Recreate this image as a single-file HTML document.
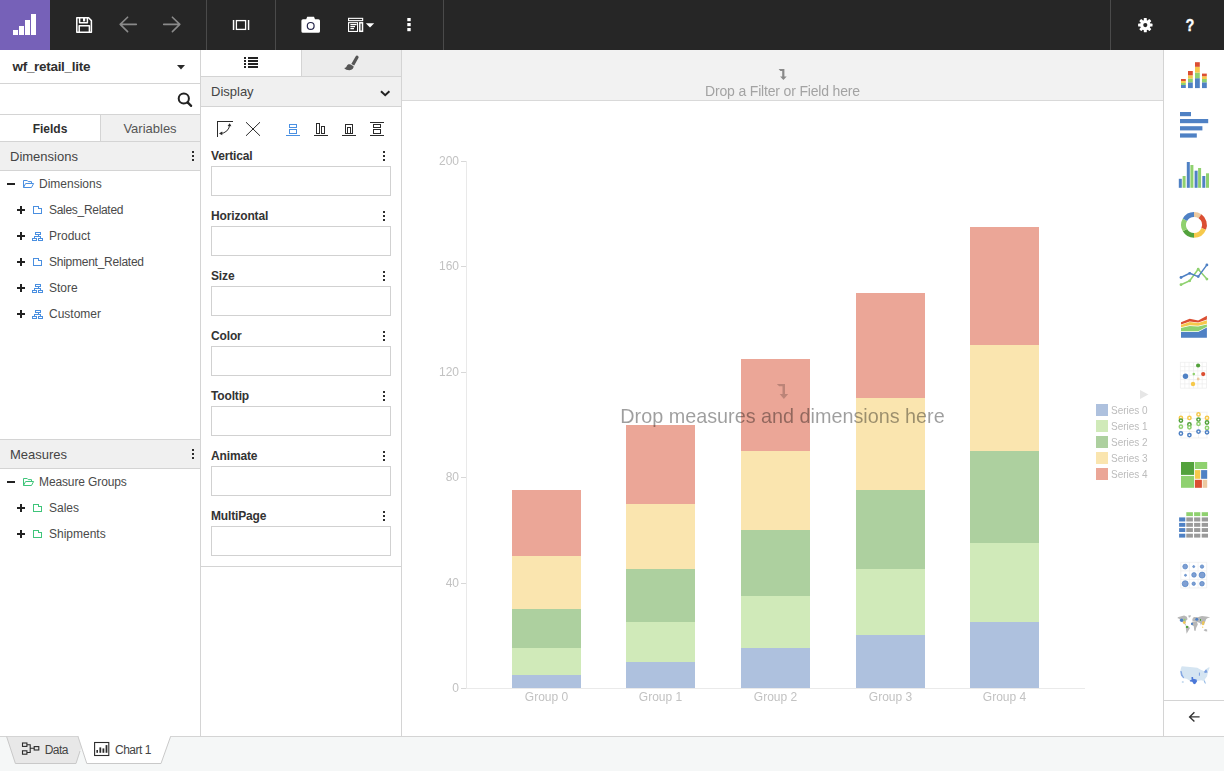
<!DOCTYPE html>
<html>
<head>
<meta charset="utf-8">
<title>WebFOCUS Designer</title>
<style>
*{box-sizing:border-box;margin:0;padding:0}
html,body{width:1224px;height:771px;overflow:hidden;background:#fff;font-family:"Liberation Sans",sans-serif;color:#333}
.abs{position:absolute}
#root{position:relative;width:1224px;height:771px;overflow:hidden;background:#fff}
#topbar{left:0;top:0;width:1224px;height:50px;background:#262626}
#logo{left:0;top:0;width:50px;height:50px;background:#7661b8}
.tsep{top:0;width:1px;height:50px;background:#4a4a4a}
.t{position:absolute;white-space:nowrap;line-height:1}
.hl{position:absolute;height:1px;background:#d4d4d4}
.vl{position:absolute;width:1px;background:#d4d4d4}
.hdr{position:absolute;background:#f0f0f0}
.box{position:absolute;left:211px;width:180px;height:30px;border:1px solid #d1d1d1;background:#fff}
.lbl{position:absolute;left:211px;font-weight:bold;font-size:12px;color:#333;line-height:1;white-space:nowrap;letter-spacing:-0.15px}
.dots{position:absolute;width:2px;height:2px;background:#2d2d2d;box-shadow:0 4px 0 #2d2d2d,0 8px 0 #2d2d2d}
.tree{position:absolute;font-size:12px;color:#4a4a4a;line-height:1;white-space:nowrap}
svg{position:absolute;overflow:visible}
</style>
</head>
<body>
<div id="root">

<!-- ================= TOP BAR ================= -->
<div id="topbar" class="abs"></div>
<div id="logo" class="abs"></div>
<svg style="left:0;top:0" width="50" height="50"><g fill="#fff"><rect x="13" y="30" width="5" height="5"/><rect x="19" y="26" width="5" height="9"/><rect x="25" y="20" width="5" height="15"/><rect x="31" y="14" width="5" height="21"/></g></svg>
<div class="abs tsep" style="left:206px"></div>
<div class="abs tsep" style="left:275px"></div>
<div class="abs tsep" style="left:443px"></div>
<div class="abs tsep" style="left:1110px"></div>
<!--TOPICONS-->
<svg style="left:0;top:0" width="1224" height="50">
<!-- save -->
<g fill="none" stroke="#fff" stroke-width="1.5" stroke-linejoin="round">
<path d="M76.8 17.8 H88.6 L91.4 20.6 V32.3 H76.8 Z"/>
<path d="M79.6 18 V22.7 H87.4 V18"/>
<path d="M79.2 32.2 V25.8 H89.4 V32.2"/>
</g>
<rect x="83" y="18" width="2.2" height="3.4" fill="#fff"/>
<!-- arrows -->
<g fill="none" stroke="#8a8a8a" stroke-width="1.6" stroke-linecap="round" stroke-linejoin="round">
<path d="M136.3 24.4 H120.2 M127.6 17.2 L120.2 24.4 L127.6 31.6"/>
<path d="M163.7 24.4 H179.8 M172.4 17.2 L179.8 24.4 L172.4 31.6"/>
</g>
<!-- fit icon -->
<g fill="#fff">
<rect x="232.8" y="20" width="1.5" height="10"/>
<rect x="247.8" y="20" width="1.5" height="10"/>
</g>
<rect x="236.4" y="20.6" width="9.2" height="8.8" fill="none" stroke="#fff" stroke-width="1.3"/>
<!-- camera -->
<path d="M303 19.2 H306.2 L307.2 16.8 H314 L315 19.2 H318.4 Q320 19.2 320 20.8 V31.2 Q320 32.8 318.4 32.8 H303 Q301.4 32.8 301.4 31.2 V20.8 Q301.4 19.2 303 19.2Z" fill="#fff"/>
<circle cx="310.7" cy="25.9" r="3.4" fill="none" stroke="#25254a" stroke-width="1.2"/>
<!-- layout icon -->
<g fill="none" stroke="#fff" stroke-width="1.1">
<rect x="348.55" y="18.35" width="14.1" height="2.3"/>
<rect x="348.55" y="22.65" width="9" height="8.8"/>
<rect x="359.8" y="22.8" width="2.7" height="8.5" stroke-width="1.5"/>
<path d="M350.4 24.6 H356.6 M350.4 26.6 H355 M350.4 28.6 H354"/>
</g>
<path d="M365.8 23.2 H374.2 L370 27.4Z" fill="#fff"/>
<!-- more dots -->
<g fill="#fff"><rect x="407.3" y="18" width="3.4" height="3.2"/><rect x="407.3" y="23" width="3.4" height="3.2"/><rect x="407.3" y="28" width="3.4" height="3.2"/></g>
<!-- gear -->
<g transform="translate(1145.3 25.1)">
<g fill="#fff">
<circle r="5.2"/>
<rect x="-1.5" y="-7.2" width="3" height="14.4" rx="0.6"/>
<rect x="-1.5" y="-7.2" width="3" height="14.4" rx="0.6" transform="rotate(45)"/>
<rect x="-1.5" y="-7.2" width="3" height="14.4" rx="0.6" transform="rotate(90)"/>
<rect x="-1.5" y="-7.2" width="3" height="14.4" rx="0.6" transform="rotate(135)"/>
</g>
<circle r="2.1" fill="#262626"/>
</g>
</svg>
<div class="t" style="left:1184.7px;top:18.3px;font-size:16px;font-weight:bold;color:#fff;-webkit-text-stroke:0.35px #fff;transform:scaleX(0.9);transform-origin:50% 50%">?</div>

<!--/TOPICONS-->

<!-- ================= LEFT PANEL ================= -->
<div class="vl" style="left:200px;top:50px;height:687px"></div>
<div class="hl" style="left:0;top:83px;width:200px"></div>
<div class="hl" style="left:0;top:114px;width:200px"></div>
<div class="hdr" style="left:100px;top:115px;width:100px;height:26px"></div>
<div class="vl" style="left:100px;top:115px;height:26px"></div>
<div class="hl" style="left:0;top:141px;width:200px"></div>
<div class="hdr" style="left:0;top:142px;width:200px;height:28px"></div>
<div class="hl" style="left:0;top:170px;width:200px"></div>
<div class="hl" style="left:0;top:439px;width:200px"></div>
<div class="hdr" style="left:0;top:440px;width:200px;height:28px"></div>
<div class="hl" style="left:0;top:468px;width:200px"></div>
<!--LEFTCONTENT-->
<div class="t" style="left:12.5px;top:59.5px;font-size:13.5px;font-weight:bold;color:#2f2f2f;letter-spacing:-0.3px">wf_retail_lite</div>
<svg style="left:177px;top:65px" width="8" height="5"><path d="M0 0 H8 L4 4.5Z" fill="#2a2a2a"/></svg>
<svg style="left:0;top:0" width="200" height="120"><circle cx="183.8" cy="98.5" r="5.1" stroke="#222" stroke-width="2" fill="none"/><path d="M187.6 102.4 L191.1 105.9" stroke="#222" stroke-width="2.3" stroke-linecap="round"/></svg>
<div class="t" style="left:0;top:122.6px;width:100px;text-align:center;font-size:12px;font-weight:bold;color:#2f2f2f">Fields</div>
<div class="t" style="left:100px;top:122px;width:100px;text-align:center;font-size:13px;color:#555">Variables</div>
<div class="t" style="left:10px;top:150px;font-size:13px;color:#444">Dimensions</div>
<div class="dots" style="left:192px;top:151px"></div>
<div class="t" style="left:10px;top:448px;font-size:13px;color:#444">Measures</div>
<div class="dots" style="left:192px;top:449px"></div>

<!-- tree expanders -->
<svg style="left:0;top:0" width="200" height="560" shape-rendering="crispEdges">
<g fill="#222">
<rect x="7" y="183" width="8" height="2"/>
<rect x="17" y="209" width="8" height="2"/><rect x="20" y="206" width="2" height="8"/>
<rect x="17" y="235" width="8" height="2"/><rect x="20" y="232" width="2" height="8"/>
<rect x="17" y="261" width="8" height="2"/><rect x="20" y="258" width="2" height="8"/>
<rect x="17" y="287" width="8" height="2"/><rect x="20" y="284" width="2" height="8"/>
<rect x="17" y="313" width="8" height="2"/><rect x="20" y="310" width="2" height="8"/>
<rect x="7" y="481" width="8" height="2"/>
<rect x="17" y="507" width="8" height="2"/><rect x="20" y="504" width="2" height="8"/>
<rect x="17" y="533" width="8" height="2"/><rect x="20" y="530" width="2" height="8"/>
</g>
</svg>
<!-- tree icons -->
<svg style="left:0;top:0" width="200" height="560">
<g stroke="#4a8fe0">
<g transform="translate(23 180)"><path d="M0.5 7.5 V0.5 H4.2 L5.2 1.6 H8.5 V3.5 M0.5 7.5 L2.6 3.5 H10.6 L8.5 7.5 Z" fill="none" stroke-width="1" stroke-linejoin="miter"/></g>
<g transform="translate(33 206)"><path d="M0.5 0.5 H5.5 V2.5 H8.5 V7.5 H0.5 Z" fill="none" stroke-width="1" stroke-linejoin="miter" shape-rendering="crispEdges"/></g>
<g transform="translate(32 232)" shape-rendering="crispEdges"><path d="M3.5 0.5 H8.5 V2.5 H3.5 Z M0.5 6.5 H4.5 V8.5 H0.5 Z M6.5 6.5 H10.5 V8.5 H6.5 Z M6 2.5 V4.5 M2.5 6.5 V4.5 H8.5 V6.5" fill="none" stroke-width="1"/></g>
<g transform="translate(33 258)"><path d="M0.5 0.5 H5.5 V2.5 H8.5 V7.5 H0.5 Z" fill="none" stroke-width="1" stroke-linejoin="miter" shape-rendering="crispEdges"/></g>
<g transform="translate(32 284)" shape-rendering="crispEdges"><path d="M3.5 0.5 H8.5 V2.5 H3.5 Z M0.5 6.5 H4.5 V8.5 H0.5 Z M6.5 6.5 H10.5 V8.5 H6.5 Z M6 2.5 V4.5 M2.5 6.5 V4.5 H8.5 V6.5" fill="none" stroke-width="1"/></g>
<g transform="translate(32 310)" shape-rendering="crispEdges"><path d="M3.5 0.5 H8.5 V2.5 H3.5 Z M0.5 6.5 H4.5 V8.5 H0.5 Z M6.5 6.5 H10.5 V8.5 H6.5 Z M6 2.5 V4.5 M2.5 6.5 V4.5 H8.5 V6.5" fill="none" stroke-width="1"/></g>
</g>
<g stroke="#3fc57a">
<g transform="translate(23 478)"><path d="M0.5 7.5 V0.5 H4.2 L5.2 1.6 H8.5 V3.5 M0.5 7.5 L2.6 3.5 H10.6 L8.5 7.5 Z" fill="none" stroke-width="1" stroke-linejoin="miter"/></g>
<g transform="translate(33 504)"><path d="M0.5 0.5 H5.5 V2.5 H8.5 V7.5 H0.5 Z" fill="none" stroke-width="1" stroke-linejoin="miter" shape-rendering="crispEdges"/></g>
<g transform="translate(33 530)"><path d="M0.5 0.5 H5.5 V2.5 H8.5 V7.5 H0.5 Z" fill="none" stroke-width="1" stroke-linejoin="miter" shape-rendering="crispEdges"/></g>
</g>
</svg>
<div class="tree" style="left:39px;top:178px">Dimensions</div>
<div class="tree" style="left:49px;top:204px;letter-spacing:-0.3px">Sales_Related</div>
<div class="tree" style="left:49px;top:230px">Product</div>
<div class="tree" style="left:49px;top:256px;letter-spacing:-0.25px">Shipment_Related</div>
<div class="tree" style="left:49px;top:282px">Store</div>
<div class="tree" style="left:49px;top:308px">Customer</div>
<div class="tree" style="left:39px;top:476px;letter-spacing:-0.12px">Measure Groups</div>
<div class="tree" style="left:49px;top:502px">Sales</div>
<div class="tree" style="left:49px;top:528px">Shipments</div>

<!--/LEFTCONTENT-->

<!-- ================= MIDDLE PANEL ================= -->
<div class="vl" style="left:401px;top:50px;height:687px"></div>
<div class="hdr" style="left:301px;top:50px;width:100px;height:26px;background:#ececec"></div>
<div class="vl" style="left:301px;top:50px;height:26px"></div>
<div class="hl" style="left:201px;top:76px;width:200px"></div>
<div class="hdr" style="left:201px;top:77px;width:200px;height:29px"></div>
<div class="hl" style="left:201px;top:106px;width:200px"></div>
<div class="hl" style="left:201px;top:566px;width:200px"></div>
<!--MIDCONTENT-->
<svg style="left:0;top:0" width="420" height="150" shape-rendering="crispEdges">
<g fill="#222">
<rect x="244" y="57" width="2" height="2"/><rect x="248" y="57" width="10" height="2"/>
<rect x="244" y="60" width="2" height="2"/><rect x="248" y="60" width="10" height="2"/>
<rect x="244" y="63" width="2" height="2"/><rect x="248" y="63" width="10" height="2"/>
<rect x="244" y="66" width="2" height="2"/><rect x="248" y="66" width="10" height="2"/>
</g>
<!-- toolbar icons -->
<g fill="#2b2b2b">
<rect x="217" y="121" width="1" height="16"/><rect x="217" y="121" width="16" height="1"/>
<rect x="314" y="135" width="14" height="1"/>
<rect x="342" y="135" width="14" height="1"/>
<rect x="370" y="135" width="14" height="1"/><rect x="370" y="122" width="14" height="1"/>
</g>
<rect x="286" y="135" width="14" height="1" fill="#4a90e2"/>
<g fill="none" stroke="#4a90e2" stroke-width="1">
<rect x="289.5" y="124.5" width="7" height="3"/><rect x="289.5" y="129.5" width="7" height="4"/>
</g>
<g fill="none" stroke="#2b2b2b" stroke-width="1">
<rect x="316.5" y="123.5" width="3" height="10"/><rect x="321.5" y="126.5" width="3" height="7"/>
<rect x="345.5" y="124.5" width="7" height="9"/><rect x="347.5" y="127.5" width="3" height="6"/>
<rect x="373.5" y="124.5" width="7" height="3"/><rect x="373.5" y="129.5" width="7" height="4"/>
</g>
</svg>
<svg style="left:0;top:0" width="420" height="150">
<!-- brush -->
<g fill="#555">
<path d="M357.6 55.8 C358.6 56.3 358.9 57.2 358.4 58.1 L354.2 65.6 L351.3 64 L355.6 56.5 C356.1 55.7 356.9 55.4 357.6 55.8Z"/>
<path d="M350.6 64.6 L353.6 66.3 C353.8 68.6 352 70.2 349.5 70.2 C347.3 70.2 345.2 69.5 344.2 68 C345.8 67.8 346.6 67 346.9 65.8 C347.3 64.4 349 63.8 350.6 64.6Z"/>
</g>
<!-- chevron -->
<path d="M381 91.2 L385.2 95.2 L389.4 91.2" fill="none" stroke="#222" stroke-width="2"/>
<!-- swap arc -->
<path d="M229.6 124.6 A9.4 8.9 0 0 1 220.2 133.5" fill="none" stroke="#2b2b2b" stroke-width="1"/>
<path d="M227.6 126 L229.7 123.2 L231.4 126.2Z M222.2 131.6 L219 133.5 L222.3 135.2Z" fill="#2b2b2b"/>
<!-- X -->
<path d="M246 122.2 L260 135.8 M260 122.2 L246 135.8" stroke="#2b2b2b" stroke-width="1"/>
</svg>
<div class="t" style="left:211px;top:85px;font-size:13px;color:#444">Display</div>
<div class="lbl" style="top:150px">Vertical</div>
<div class="dots" style="left:383px;top:151px"></div>
<div class="box" style="top:166px"></div>
<div class="lbl" style="top:210px">Horizontal</div>
<div class="dots" style="left:383px;top:211px"></div>
<div class="box" style="top:226px"></div>
<div class="lbl" style="top:270px">Size</div>
<div class="dots" style="left:383px;top:271px"></div>
<div class="box" style="top:286px"></div>
<div class="lbl" style="top:330px">Color</div>
<div class="dots" style="left:383px;top:331px"></div>
<div class="box" style="top:346px"></div>
<div class="lbl" style="top:390px">Tooltip</div>
<div class="dots" style="left:383px;top:391px"></div>
<div class="box" style="top:406px"></div>
<div class="lbl" style="top:450px">Animate</div>
<div class="dots" style="left:383px;top:451px"></div>
<div class="box" style="top:466px"></div>
<div class="lbl" style="top:510px">MultiPage</div>
<div class="dots" style="left:383px;top:511px"></div>
<div class="box" style="top:526px"></div>
<!--/MIDCONTENT-->

<!-- ================= MAIN ================= -->
<div class="hdr" style="left:402px;top:50px;width:761px;height:50px;background:#f2f2f2"></div>
<div class="hl" style="left:402px;top:100px;width:761px;background:#d9d9d9"></div>
<!--CHART-->
<div class="abs" style="left:0;top:0;width:1224px;height:771px;will-change:transform">
<svg style="left:0;top:0" width="1224" height="771" shape-rendering="crispEdges">
<rect x="512" y="674.83" width="69" height="13.17" fill="#aec1de"/>
<rect x="512" y="648.48" width="69" height="26.35" fill="#d0eab9"/>
<rect x="512" y="608.95" width="69" height="39.52" fill="#add09f"/>
<rect x="512" y="556.25" width="69" height="52.70" fill="#fae5af"/>
<rect x="512" y="490.38" width="69" height="65.88" fill="#eba697"/>
<rect x="626" y="661.65" width="69" height="26.35" fill="#aec1de"/>
<rect x="626" y="622.12" width="69" height="39.52" fill="#d0eab9"/>
<rect x="626" y="569.42" width="69" height="52.70" fill="#add09f"/>
<rect x="626" y="503.55" width="69" height="65.87" fill="#fae5af"/>
<rect x="626" y="424.50" width="69" height="79.05" fill="#eba697"/>
<rect x="741" y="648.48" width="69" height="39.52" fill="#aec1de"/>
<rect x="741" y="595.77" width="69" height="52.70" fill="#d0eab9"/>
<rect x="741" y="529.90" width="69" height="65.88" fill="#add09f"/>
<rect x="741" y="450.85" width="69" height="79.05" fill="#fae5af"/>
<rect x="741" y="358.62" width="69" height="92.23" fill="#eba697"/>
<rect x="856" y="635.30" width="69" height="52.70" fill="#aec1de"/>
<rect x="856" y="569.42" width="69" height="65.88" fill="#d0eab9"/>
<rect x="856" y="490.38" width="69" height="79.05" fill="#add09f"/>
<rect x="856" y="398.15" width="69" height="92.22" fill="#fae5af"/>
<rect x="856" y="292.75" width="69" height="105.40" fill="#eba697"/>
<rect x="970" y="622.12" width="69" height="65.88" fill="#aec1de"/>
<rect x="970" y="543.08" width="69" height="79.05" fill="#d0eab9"/>
<rect x="970" y="450.85" width="69" height="92.23" fill="#add09f"/>
<rect x="970" y="345.45" width="69" height="105.40" fill="#fae5af"/>
<rect x="970" y="226.88" width="69" height="118.57" fill="#eba697"/>
<rect x="466" y="161" width="1" height="528" fill="#e9e9e9"/>
<rect x="466" y="688" width="619" height="1" fill="#eaeaea"/>
<rect x="461" y="688" width="5" height="1" fill="#d8d8d8"/>
<rect x="461" y="583" width="5" height="1" fill="#d8d8d8"/>
<rect x="461" y="477" width="5" height="1" fill="#d8d8d8"/>
<rect x="461" y="372" width="5" height="1" fill="#d8d8d8"/>
<rect x="461" y="266" width="5" height="1" fill="#d8d8d8"/>
<rect x="461" y="161" width="5" height="1" fill="#d8d8d8"/>
</svg>
<div class="t" style="right:765px;top:682px;font-size:12px;color:#c2c2c2">0</div>
<div class="t" style="right:765px;top:577px;font-size:12px;color:#c2c2c2">40</div>
<div class="t" style="right:765px;top:471px;font-size:12px;color:#c2c2c2">80</div>
<div class="t" style="right:765px;top:366px;font-size:12px;color:#c2c2c2">120</div>
<div class="t" style="right:765px;top:260px;font-size:12px;color:#c2c2c2">160</div>
<div class="t" style="right:765px;top:155px;font-size:12px;color:#c2c2c2">200</div>
<div class="t" style="left:492px;top:691px;width:109px;text-align:center;font-size:12px;color:#c2c2c2">Group 0</div>
<div class="t" style="left:606px;top:691px;width:109px;text-align:center;font-size:12px;color:#c2c2c2">Group 1</div>
<div class="t" style="left:721px;top:691px;width:109px;text-align:center;font-size:12px;color:#c2c2c2">Group 2</div>
<div class="t" style="left:836px;top:691px;width:109px;text-align:center;font-size:12px;color:#c2c2c2">Group 3</div>
<div class="t" style="left:950px;top:691px;width:109px;text-align:center;font-size:12px;color:#c2c2c2">Group 4</div>
<div class="abs" style="left:1096px;top:404px;width:12px;height:12px;background:#aec1de"></div>
<div class="t" style="left:1111px;top:406px;font-size:10px;color:#bcbcbc">Series 0</div>
<div class="abs" style="left:1096px;top:420px;width:12px;height:12px;background:#d0eab9"></div>
<div class="t" style="left:1111px;top:422px;font-size:10px;color:#bcbcbc">Series 1</div>
<div class="abs" style="left:1096px;top:436px;width:12px;height:12px;background:#add09f"></div>
<div class="t" style="left:1111px;top:438px;font-size:10px;color:#bcbcbc">Series 2</div>
<div class="abs" style="left:1096px;top:452px;width:12px;height:12px;background:#fae5af"></div>
<div class="t" style="left:1111px;top:454px;font-size:10px;color:#bcbcbc">Series 3</div>
<div class="abs" style="left:1096px;top:468px;width:12px;height:12px;background:#eba697"></div>
<div class="t" style="left:1111px;top:470px;font-size:10px;color:#bcbcbc">Series 4</div>
<svg style="left:1140px;top:390px" width="9" height="9"><path d="M0 0 L8.5 4.5 L0 9Z" fill="#e6e6e6"/></svg>
<div class="t" id="dropf" style="left:402px;top:84px;width:761px;text-align:center;font-size:14px;letter-spacing:-0.17px;color:#a3a3a3">Drop a Filter or Field here</div>
<svg style="left:0;top:0" width="1224" height="120"><path d="M778.6 69 H784.4 V76.4 H786.7 L783.4 80.1 L780.1 76.4 H782.2 V71 H780.4 Z" fill="#8a8a8a"/></svg>
<div class="t" id="dropm" style="left:402px;top:406.8px;width:761px;text-align:center;font-size:19.8px;color:rgba(0,0,0,0.38)">Drop measures and dimensions here</div>
<svg style="left:0;top:0" width="1224" height="420"><path d="M776.8 384 H785 V394.1 H788.2 L783.9 399 L779.7 394.1 H782.5 V386.2 H779.2 Z" fill="rgba(0,0,0,0.2)"/></svg>
</div>
<!--/CHART-->

<!-- ================= RIGHT STRIP ================= -->
<div class="vl" style="left:1163px;top:50px;height:687px"></div>
<div class="hl" style="left:1164px;top:700px;width:60px"></div>
<!--RIGHTICONS-->
<svg style="left:0;top:0" width="1224" height="771">
<rect x="1181.0" y="85.0" width="4.8" height="3.0" fill="#4f81c4"/>
<rect x="1181.0" y="83.0" width="4.8" height="2.0" fill="#8fd16f"/>
<rect x="1181.0" y="81.0" width="4.8" height="2.0" fill="#f6c94c"/>
<rect x="1181.0" y="79.0" width="4.8" height="2.0" fill="#db4e32"/>
<rect x="1188.0" y="82.3" width="4.8" height="5.8" fill="#4f81c4"/>
<rect x="1188.0" y="78.5" width="4.8" height="3.8" fill="#8fd16f"/>
<rect x="1188.0" y="75.3" width="4.8" height="3.2" fill="#f6c94c"/>
<rect x="1188.0" y="71.0" width="4.8" height="4.3" fill="#db4e32"/>
<rect x="1195.0" y="78.2" width="4.8" height="9.9" fill="#4f81c4"/>
<rect x="1195.0" y="72.6" width="4.8" height="5.6" fill="#8fd16f"/>
<rect x="1195.0" y="66.8" width="4.8" height="5.8" fill="#f6c94c"/>
<rect x="1195.0" y="62.2" width="4.8" height="4.6" fill="#db4e32"/>
<rect x="1202.0" y="82.3" width="4.8" height="5.8" fill="#4f81c4"/>
<rect x="1202.0" y="79.0" width="4.8" height="3.3" fill="#8fd16f"/>
<rect x="1202.0" y="76.2" width="4.8" height="2.8" fill="#f6c94c"/>
<rect x="1202.0" y="73.6" width="4.8" height="2.6" fill="#db4e32"/>
<rect x="1180" y="112.0" width="11.0" height="4.2" fill="#4f81c4"/>
<rect x="1180" y="119.0" width="28.2" height="4.2" fill="#4f81c4"/>
<rect x="1180" y="126.2" width="22.4" height="4.2" fill="#4f81c4"/>
<rect x="1180" y="133.4" width="16.8" height="4.2" fill="#4f81c4"/>
<rect x="1178.8" y="178.8" width="3" height="9.0" fill="#4f81c4"/>
<rect x="1182.6" y="176.0" width="3" height="11.8" fill="#8fd16f"/>
<rect x="1186.8" y="162.0" width="3" height="25.8" fill="#4f81c4"/>
<rect x="1190.4" y="165.0" width="3" height="22.8" fill="#8fd16f"/>
<rect x="1194.6" y="170.7" width="3" height="17.1" fill="#4f81c4"/>
<rect x="1198.1" y="168.0" width="3" height="19.8" fill="#8fd16f"/>
<rect x="1202.3" y="176.0" width="3" height="11.8" fill="#4f81c4"/>
<rect x="1206.0" y="173.3" width="3" height="14.5" fill="#8fd16f"/>
<path d="M1194.00 212.00 A12.90 12.90 0 0 1 1201.40 214.33 L1198.59 218.35 A8.00 8.00 0 0 0 1194.00 216.90 Z" fill="#ecc9a0"/>
<path d="M1201.40 214.33 A12.90 12.90 0 0 1 1205.96 229.73 L1201.42 227.90 A8.00 8.00 0 0 0 1198.59 218.35 Z" fill="#db4e32"/>
<path d="M1205.96 229.73 A12.90 12.90 0 0 1 1194.00 237.80 L1194.00 232.90 A8.00 8.00 0 0 0 1201.42 227.90 Z" fill="#f6c94c"/>
<path d="M1194.00 237.80 A12.90 12.90 0 0 1 1182.83 231.35 L1187.07 228.90 A8.00 8.00 0 0 0 1194.00 232.90 Z" fill="#53a23c"/>
<path d="M1182.83 231.35 A12.90 12.90 0 0 1 1182.83 218.45 L1187.07 220.90 A8.00 8.00 0 0 0 1187.07 228.90 Z" fill="#8fd16f"/>
<path d="M1182.83 218.45 A12.90 12.90 0 0 1 1194.00 212.00 L1194.00 216.90 A8.00 8.00 0 0 0 1187.07 220.90 Z" fill="#4f81c4"/>
<polyline points="1181.0,284.7 1189.7,280.8 1198.2,269.2 1206.9,279.1" fill="none" stroke="#8fd16f" stroke-width="1.5" stroke-linejoin="round"/>
<circle cx="1181.0" cy="284.7" r="1.4" fill="#8fd16f"/>
<circle cx="1189.7" cy="280.8" r="1.4" fill="#8fd16f"/>
<circle cx="1198.2" cy="269.2" r="1.4" fill="#8fd16f"/>
<circle cx="1206.9" cy="279.1" r="1.4" fill="#8fd16f"/>
<polyline points="1181.0,277.5 1189.7,273.3 1198.2,276.6 1206.9,264.9" fill="none" stroke="#4f81c4" stroke-width="1.5" stroke-linejoin="round"/>
<circle cx="1181.0" cy="277.5" r="1.4" fill="#4f81c4"/>
<circle cx="1189.7" cy="273.3" r="1.4" fill="#4f81c4"/>
<circle cx="1198.2" cy="276.6" r="1.4" fill="#4f81c4"/>
<circle cx="1206.9" cy="264.9" r="1.4" fill="#4f81c4"/>
<polygon points="1181.0,322.3 1189.7,318.7 1198.2,320.6 1206.9,315.8 1206.9,319.6 1198.2,322.4 1189.7,321.6 1181.0,324.4" fill="#db4e32"/>
<polygon points="1181.0,324.9 1189.7,322.1 1198.2,322.9 1206.9,320.2 1206.9,323.8 1198.2,325.8 1189.7,325.2 1181.0,327.3" fill="#f6c94c"/>
<polygon points="1181.0,327.9 1189.7,325.9 1198.2,326.5 1206.9,324.6 1206.9,326.8 1198.2,331.3 1189.7,331.3 1181.0,331.3" fill="#8fd16f"/>
<polygon points="1181.0,331.9 1189.7,331.9 1198.2,331.9 1206.9,327.5 1206.9,337.8 1198.2,337.8 1189.7,337.8 1181.0,337.8" fill="#4f81c4"/>
<path d="M1180.4 362.3 V388.2 M1180.4 362.3 H1206.5" stroke="#e9e9e9" stroke-width="0.6" fill="none"/>
<path d="M1184.8 362.3 V388.2 M1180.4 366.6 H1206.5" stroke="#e9e9e9" stroke-width="0.6" fill="none"/>
<path d="M1189.1 362.3 V388.2 M1180.4 370.9 H1206.5" stroke="#e9e9e9" stroke-width="0.6" fill="none"/>
<path d="M1193.5 362.3 V388.2 M1180.4 375.3 H1206.5" stroke="#e9e9e9" stroke-width="0.6" fill="none"/>
<path d="M1197.8 362.3 V388.2 M1180.4 379.6 H1206.5" stroke="#e9e9e9" stroke-width="0.6" fill="none"/>
<path d="M1202.2 362.3 V388.2 M1180.4 383.9 H1206.5" stroke="#e9e9e9" stroke-width="0.6" fill="none"/>
<path d="M1206.5 362.3 V388.2 M1180.4 388.2 H1206.5" stroke="#e9e9e9" stroke-width="0.6" fill="none"/>
<circle cx="1198.1" cy="365.5" r="2.1" fill="#53a23c"/>
<circle cx="1185.5" cy="376.3" r="2.7" fill="#4f81c4"/>
<circle cx="1193.8" cy="374.1" r="1.3" fill="#8fd16f"/>
<circle cx="1203.2" cy="374.1" r="2.1" fill="#db4e32"/>
<circle cx="1198.2" cy="379.0" r="1.4" fill="#ecc9a0"/>
<circle cx="1193.0" cy="384.0" r="2.2" fill="#f6c94c"/>
<path d="M1180.9 412.2 V438" stroke="#e9e9e9" stroke-width="0.6"/>
<path d="M1189.4 412.2 V438" stroke="#e9e9e9" stroke-width="0.6"/>
<path d="M1198.5 412.2 V438" stroke="#e9e9e9" stroke-width="0.6"/>
<path d="M1207.0 412.2 V438" stroke="#e9e9e9" stroke-width="0.6"/>
<path d="M1180.4 412.2 H1207.6" stroke="#e9e9e9" stroke-width="0.6"/>
<path d="M1180.4 418.6 H1207.6" stroke="#e9e9e9" stroke-width="0.6"/>
<path d="M1180.4 425.0 H1207.6" stroke="#e9e9e9" stroke-width="0.6"/>
<path d="M1180.4 431.5 H1207.6" stroke="#e9e9e9" stroke-width="0.6"/>
<path d="M1180.4 438.0 H1207.6" stroke="#e9e9e9" stroke-width="0.6"/>
<circle cx="1180.9" cy="417.9" r="1.65" fill="#fff" stroke="#f6c94c" stroke-width="1.5"/>
<circle cx="1189.4" cy="417.9" r="1.65" fill="#fff" stroke="#f6c94c" stroke-width="1.5"/>
<circle cx="1198.5" cy="414.4" r="1.65" fill="#fff" stroke="#f6c94c" stroke-width="1.5"/>
<circle cx="1207.0" cy="417.9" r="1.65" fill="#fff" stroke="#f6c94c" stroke-width="1.5"/>
<circle cx="1180.9" cy="420.6" r="1.65" fill="#fff" stroke="#53a23c" stroke-width="1.5"/>
<circle cx="1189.4" cy="424.4" r="1.65" fill="#fff" stroke="#53a23c" stroke-width="1.5"/>
<circle cx="1198.5" cy="419.6" r="1.65" fill="#fff" stroke="#53a23c" stroke-width="1.5"/>
<circle cx="1207.0" cy="422.5" r="1.65" fill="#fff" stroke="#53a23c" stroke-width="1.5"/>
<circle cx="1180.9" cy="426.7" r="1.65" fill="#fff" stroke="#8fd16f" stroke-width="1.5"/>
<circle cx="1189.4" cy="427.3" r="1.65" fill="#fff" stroke="#8fd16f" stroke-width="1.5"/>
<circle cx="1198.5" cy="423.8" r="1.65" fill="#fff" stroke="#8fd16f" stroke-width="1.5"/>
<circle cx="1207.0" cy="428.0" r="1.65" fill="#fff" stroke="#8fd16f" stroke-width="1.5"/>
<circle cx="1180.9" cy="433.5" r="1.65" fill="#fff" stroke="#4f81c4" stroke-width="1.5"/>
<circle cx="1189.4" cy="435.1" r="1.65" fill="#fff" stroke="#4f81c4" stroke-width="1.5"/>
<circle cx="1198.5" cy="431.6" r="1.65" fill="#fff" stroke="#4f81c4" stroke-width="1.5"/>
<circle cx="1207.0" cy="432.3" r="1.65" fill="#fff" stroke="#4f81c4" stroke-width="1.5"/>
<rect x="1181.0" y="462.0" width="13.1" height="12.9" fill="#53a23c"/>
<rect x="1181.0" y="475.9" width="13.1" height="11.9" fill="#8fd16f"/>
<rect x="1194.9" y="462.0" width="12.3" height="7.0" fill="#8fd16f"/>
<rect x="1194.9" y="470.1" width="5.4" height="8.7" fill="#f6c94c"/>
<rect x="1201.1" y="470.1" width="6.1" height="8.7" fill="#4f81c4"/>
<rect x="1194.9" y="479.8" width="7.0" height="8.0" fill="#db4e32"/>
<rect x="1202.6" y="479.8" width="4.6" height="8.0" fill="#ecc9a0"/>
<rect x="1186.3" y="512.2" width="6.6" height="3.9" fill="#8fd16f"/>
<rect x="1194.1" y="512.2" width="6.2" height="3.9" fill="#8fd16f"/>
<rect x="1201.7" y="512.2" width="6.3" height="3.9" fill="#8fd16f"/>
<rect x="1179.1" y="517.4" width="6.2" height="4.1" fill="#4f81c4"/>
<rect x="1186.3" y="517.4" width="6.6" height="4.1" fill="#9a9a9a"/>
<rect x="1194.1" y="517.4" width="6.2" height="4.1" fill="#9a9a9a"/>
<rect x="1201.7" y="517.4" width="6.3" height="4.1" fill="#9a9a9a"/>
<rect x="1179.1" y="522.9" width="6.2" height="3.9" fill="#4f81c4"/>
<rect x="1186.3" y="522.9" width="6.6" height="3.9" fill="#9a9a9a"/>
<rect x="1194.1" y="522.9" width="6.2" height="3.9" fill="#9a9a9a"/>
<rect x="1201.7" y="522.9" width="6.3" height="3.9" fill="#9a9a9a"/>
<rect x="1179.1" y="528.1" width="6.2" height="3.9" fill="#4f81c4"/>
<rect x="1186.3" y="528.1" width="6.6" height="3.9" fill="#9a9a9a"/>
<rect x="1194.1" y="528.1" width="6.2" height="3.9" fill="#9a9a9a"/>
<rect x="1201.7" y="528.1" width="6.3" height="3.9" fill="#9a9a9a"/>
<rect x="1179.1" y="533.7" width="6.2" height="3.9" fill="#4f81c4"/>
<rect x="1186.3" y="533.7" width="6.6" height="3.9" fill="#9a9a9a"/>
<rect x="1194.1" y="533.7" width="6.2" height="3.9" fill="#9a9a9a"/>
<rect x="1201.7" y="533.7" width="6.3" height="3.9" fill="#9a9a9a"/>
<path d="M1180.8 562.3 V588 M1180.8 562.3 H1206.7" stroke="#e9e9e9" stroke-width="0.6" fill="none"/>
<path d="M1189.4 562.3 V588 M1180.8 570.9 H1206.7" stroke="#e9e9e9" stroke-width="0.6" fill="none"/>
<path d="M1198.1 562.3 V588 M1180.8 579.4 H1206.7" stroke="#e9e9e9" stroke-width="0.6" fill="none"/>
<path d="M1206.7 562.3 V588 M1180.8 588.0 H1206.7" stroke="#e9e9e9" stroke-width="0.6" fill="none"/>
<circle cx="1185.2" cy="566.6" r="2.4" fill="#7f9fd2" stroke="#4f81c4" stroke-width="0.7"/>
<circle cx="1193.7" cy="566.6" r="1.0" fill="#7f9fd2" stroke="#4f81c4" stroke-width="0.7"/>
<circle cx="1202.0" cy="566.6" r="1.7" fill="#7f9fd2" stroke="#4f81c4" stroke-width="0.7"/>
<circle cx="1185.5" cy="575.3" r="1.0" fill="#7f9fd2" stroke="#4f81c4" stroke-width="0.7"/>
<circle cx="1194.0" cy="574.9" r="2.3" fill="#7f9fd2" stroke="#4f81c4" stroke-width="0.7"/>
<circle cx="1202.1" cy="575.1" r="3.0" fill="#7f9fd2" stroke="#4f81c4" stroke-width="0.7"/>
<circle cx="1185.2" cy="583.7" r="3.0" fill="#7f9fd2" stroke="#4f81c4" stroke-width="0.7"/>
<circle cx="1193.7" cy="583.7" r="1.7" fill="#7f9fd2" stroke="#4f81c4" stroke-width="0.7"/>
<circle cx="1202.0" cy="583.7" r="2.3" fill="#7f9fd2" stroke="#4f81c4" stroke-width="0.7"/>
<g fill="#b7b7b7">
<path d="M1177.7 617.2 L1180.5 616.6 L1184.1 615.6 L1186.8 616.8 L1187.6 619.3 L1186.2 620.6 L1185.7 621.9 L1185.2 623.2 L1186.5 626.3 L1185.6 625.6 L1184.3 624 L1183.3 623.2 L1181.8 621.3 L1180.2 620.1 L1178.9 618.6 L1177.8 618.4Z"/>
<path d="M1188.2 615.6 L1190.9 615.2 L1190.4 617 L1188.9 617.7Z"/>
<path d="M1186 626 L1188.8 626.3 L1189.9 628.3 L1188.2 631 L1186.6 633.8 L1186.1 630.2 L1185.8 627.5Z"/>
<path d="M1192.3 619.4 L1193 617.8 L1194.2 617 L1198.1 617.2 L1200 616.4 L1202 616 L1206 616.6 L1210.2 617.2 L1207.4 618.2 L1206.3 619 L1205.4 621.3 L1204.6 623 L1204.1 624.9 L1202.6 624.5 L1201.6 623.8 L1200.9 625.4 L1200.1 622.9 L1198.6 622.4 L1197.2 622 L1194.6 621.4 L1192.6 621.2Z"/>
<path d="M1192.3 621.8 L1197 621.8 L1197.8 624.4 L1196.3 627.5 L1195.5 631 L1194.2 630.6 L1193.8 626.3 L1191.5 624.9 L1191.3 622.9Z"/>
<path d="M1203.6 630.3 L1205.1 629.1 L1207.1 629.5 L1207.2 631.5 L1205.2 631.2Z"/>
</g>
<circle cx="1181.6" cy="620.3" r="1.7" fill="#4f81c4"/><circle cx="1184.5" cy="619.8" r="1" fill="#8fd16f"/><circle cx="1184.3" cy="622.5" r="1.3" fill="#f6c94c"/>
<circle cx="1187" cy="626.9" r="1.2" fill="#53a23c"/><circle cx="1196.8" cy="619.3" r="1.5" fill="#4f81c4"/><circle cx="1192" cy="623.9" r="1.1" fill="#4f81c4"/>
<rect x="1200" y="619" width="1" height="1.9" fill="#53a23c"/><circle cx="1203.4" cy="622.4" r="1.2" fill="#f6c94c"/><circle cx="1203" cy="624.3" r="1" fill="#f6c94c"/><circle cx="1202.7" cy="627.2" r="0.6" fill="#f6c94c"/>
<!-- US map -->
<path d="M1181.8 666.2 L1190 667 L1197.3 667.8 L1201.2 670.1 L1204.4 671.3 L1206.3 669 L1208.2 667.6 L1209.8 667.6 L1209 669.3 L1207.9 672.1 L1207.1 676.3 L1204.7 679.5 L1205.9 683.3 L1204.9 683.5 L1203.6 681 L1201.2 680.2 L1197.3 681 L1195 684.1 L1193.5 683.7 L1192.3 681.4 L1189.6 680.6 L1186.5 678.7 L1183.3 678.3 L1181 675.6 L1180.2 671.7 L1181 668Z" fill="#d5e5f2"/>
<path d="M1180.3 671 L1181.8 671.2 L1182.4 674.4 L1184.2 677.8 L1183.3 678.3 L1181 675.6Z" fill="#86a8e2"/>
<path d="M1191.5 677.1 L1193.1 677.1 L1193.1 678.7 L1196.6 679.5 L1197 681.4 L1195 684.2 L1193.5 683.8 L1192.3 681.8 L1190 681.6 L1189.8 680.2 L1191.5 680Z" fill="#4b78d8"/>
<rect x="1198.9" y="672.6" width="1.1" height="3.1" fill="#86a8e2"/>
<path d="M1204.2 671.6 L1206.1 669.2 L1207 671 L1207.6 672.6 L1204.6 673Z" fill="#7a9fe0"/>
<path d="M1203.9 681 L1204.6 680.6 L1205.8 683.4 L1205 683.6Z" fill="#8fb5e6"/>
<circle cx="1182.8" cy="682" r="1.1" fill="#c6dbef"/>

<path d="M1199.6 716.9 H1190 M1194.4 712.2 L1189.6 716.9 L1194.4 721.6" fill="none" stroke="#333" stroke-width="1.4"/>
</svg>
<!--/RIGHTICONS-->

<!-- ================= BOTTOM BAR ================= -->
<div class="abs" style="left:0;top:737px;width:1224px;height:34px;background:#f5f7f7"></div>
<div class="hl" style="left:0;top:736px;width:1224px"></div>
<!--BOTTOM-->
<svg style="left:0;top:0" width="1224" height="771">
<path d="M6.6 737 L15.4 763.5 H76 L85 737 Z" fill="#e8e8e8"/>
<path d="M6.6 736.5 L15.4 763.5 H76 L80 751" fill="none" stroke="#c9c9c9" stroke-width="1"/>
<path d="M78 736.5 L86.8 763.5 H161 L170.6 736.5 Z" fill="#fff"/>
<path d="M78 736.5 L86.8 763.5 H161 L170.6 736.5" fill="none" stroke="#c9c9c9" stroke-width="1"/>
<rect x="79" y="736" width="91" height="1" fill="#fff"/>
<!-- data icon -->
<g fill="none" stroke="#2b2b2b" stroke-width="1.1">
<rect x="22.5" y="743" width="4.4" height="3.4"/>
<rect x="22.5" y="750.8" width="4.4" height="3.4"/>
<rect x="34.2" y="746.6" width="4.6" height="3.4"/>
<path d="M27 744.7 H30.2 V752.5 H27 M30.2 748.3 H34.2"/>
</g>
<!-- chart icon -->
<rect x="94.6" y="742.5" width="14.2" height="13" fill="none" stroke="#2b2b2b" stroke-width="1.1"/>
<g fill="#2b2b2b">
<rect x="96.4" y="750" width="1.6" height="2.8"/><rect x="99.4" y="747.4" width="1.8" height="5.4"/><rect x="102.5" y="748.4" width="1.8" height="4.4"/><rect x="105.6" y="745.1" width="1.8" height="7.7"/>
</g>
</svg>
<div class="t" style="left:44.7px;top:743.5px;font-size:12px;color:#444;letter-spacing:-0.55px">Data</div>
<div class="t" style="left:115px;top:743.5px;font-size:12px;color:#444;letter-spacing:-0.5px">Chart 1</div>

<!--/BOTTOM-->

</div>
</body>
</html>
